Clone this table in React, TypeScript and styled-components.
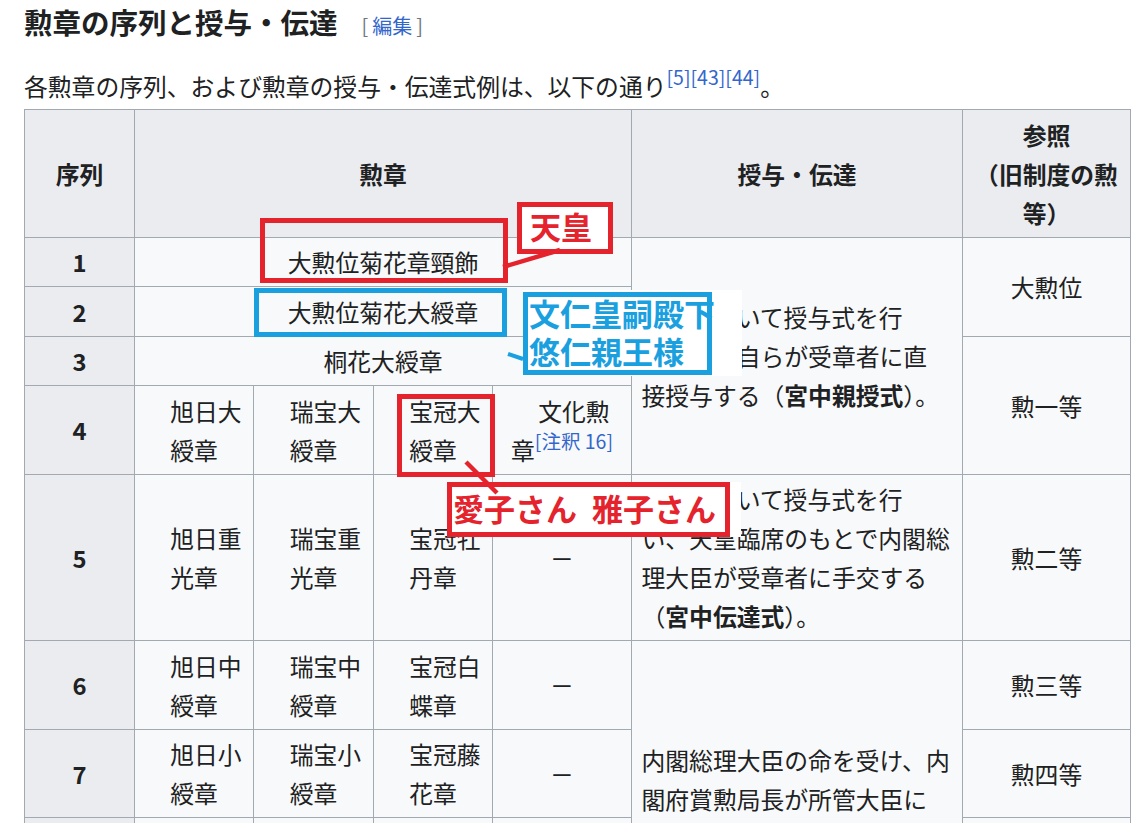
import styled, { createGlobalStyle } from "styled-components";

const RED = "#e4232d";
const BLUE = "#1ba0df";
const LINK = "#3366cc";
const RULE = "#a2a9b1";

const GlobalStyle = createGlobalStyle`
  html, body {
    margin: 0;
    padding: 0;
    background: #ffffff;
  }
  body {
    color: #202122;
    font-family: "Noto Sans CJK JP", "Noto Sans", sans-serif;
  }
`;

const Page = styled.main`
  position: relative;
  width: 1137px;
  height: 823px;
  overflow: hidden;
  padding-left: 24px;
  box-sizing: border-box;
`;

const Heading = styled.h3`
  margin: 0;
  font-size: 28.5px;
  line-height: 44px;
  font-weight: 700;
`;

const EditSection = styled.span`
  margin-left: 20px;
  font-size: 20px;
  font-weight: 400;
`;

const Bracket = styled.span`
  margin: 0 4px;
  color: #72777d;
`;

const EditLink = styled.a`
  color: ${LINK};
  text-decoration: none;
`;

const Lead = styled.p`
  margin: 18px 0 0;
  font-size: 23.8px;
  line-height: 39px;
`;

const Ref = styled.sup`
  font-size: 19.5px;
  line-height: 0;
  vertical-align: 0.55em;
  color: ${LINK};
  text-indent: 0;
`;

const NoBreak = styled.span`
  white-space: nowrap;
`;

const Table = styled.table`
  margin-top: 4px;
  width: 1106px;
  table-layout: fixed;
  border-collapse: collapse;
  background: #f8f9fa;
  font-size: 23.8px;
  line-height: 39px;
  border: 1px solid ${RULE};
`;

const Cell = styled.td<{ $indent?: boolean; $left?: boolean }>`
  border: 1px solid ${RULE};
  padding: 4.76px 9.52px;
  text-align: ${(p) => (p.$left ? "left" : "center")};
  text-indent: ${(p) => (p.$indent ? "1em" : "0")};
  vertical-align: middle;
`;

const HeadCell = styled.th`
  border: 1px solid ${RULE};
  padding: 4.76px 9.52px;
  background: #eaecf0;
  font-weight: 700;
  text-align: center;
  vertical-align: middle;
`;

/* annotation overlays drawn on top of the screenshot */
const Frame = styled.div<{ $x: number; $y: number; $w: number; $h: number; $color: string }>`
  position: absolute;
  left: ${(p) => p.$x}px;
  top: ${(p) => p.$y}px;
  width: ${(p) => p.$w}px;
  height: ${(p) => p.$h}px;
  box-sizing: border-box;
  border: 5px solid ${(p) => p.$color};
`;

const RedLabel = styled(Frame)<{ $spill?: number }>`
  background: #ffffff;
  box-shadow: ${(p) => (p.$spill ? `${p.$spill}px 0 0 0 #ffffff` : "none")};
  color: ${RED};
  font-size: 31px;
  font-weight: 700;
  line-height: 42px;
  white-space: nowrap;
`;

const EmperorText = styled.div`
  padding-left: 8px;
  margin-top: -2px;
`;

const PrincessText = styled.div`
  display: flex;
  gap: 15px;
  padding-left: 1px;
`;

const HeirPatch = styled.div`
  position: absolute;
  left: 523px;
  top: 290px;
  width: 219px;
  height: 86px;
  background: #ffffff;
`;

const HeirBox = styled.div`
  margin-top: 2px;
  width: 189px;
  height: 83px;
  box-sizing: border-box;
  border: 5px solid ${BLUE};
  color: ${BLUE};
  font-size: 31px;
  font-weight: 700;
  line-height: 38px;
  white-space: nowrap;
`;

const HeirLines = styled.div`
  margin-top: -3px;
  padding-left: 1px;
`;

const Connectors = styled.svg`
  position: absolute;
  left: 0;
  top: 0;
  pointer-events: none;
`;

const lowerRows = [
  { n: 5, a: "旭日重光章", b: "瑞宝重光章", c: "宝冠牡丹章", old: "勲二等" },
  { n: 6, a: "旭日中綬章", b: "瑞宝中綬章", c: "宝冠白蝶章", old: "勲三等" },
  { n: 7, a: "旭日小綬章", b: "瑞宝小綬章", c: "宝冠藤花章", old: "勲四等" },
  { n: 8, a: "旭日双光章", b: "瑞宝双光章", c: "宝冠杏葉章", old: "勲五等" },
  { n: 9, a: "旭日単光章", b: "瑞宝単光章", c: "宝冠波光章", old: "勲六等" },
];

export default function App() {
  return (
    <Page>
      <GlobalStyle />
      <Heading>
        勲章の序列と授与・伝達
        <EditSection>
          <Bracket>[</Bracket>
          <EditLink href="#">編集</EditLink>
          <Bracket>]</Bracket>
        </EditSection>
      </Heading>
      <Lead>
        各勲章の序列、および勲章の授与・伝達式例は、以下の通り<Ref>[5][43][44]</Ref>。
      </Lead>

      <Table>
        <colgroup>
          <col style={{ width: 110 }} />
          <col style={{ width: 119 }} />
          <col style={{ width: 120 }} />
          <col style={{ width: 119 }} />
          <col style={{ width: 139 }} />
          <col style={{ width: 331 }} />
          <col style={{ width: 168 }} />
        </colgroup>
        <thead>
          <tr>
            <HeadCell>序列</HeadCell>
            <HeadCell colSpan={4}>勲章</HeadCell>
            <HeadCell>授与・伝達</HeadCell>
            <HeadCell>
              参照
              <br />
              （旧制度の勲等）
            </HeadCell>
          </tr>
        </thead>
        <tbody>
          <tr>
            <HeadCell>1</HeadCell>
            <Cell colSpan={4}>大勲位菊花章頸飾</Cell>
            <Cell rowSpan={4} $left>
              宮殿において授与式を行
              <br />
              い、天皇自らが受章者に直
              <br />
              接授与する（<b>宮中親授式</b>）。
            </Cell>
            <Cell rowSpan={2}>大勲位</Cell>
          </tr>
          <tr>
            <HeadCell>2</HeadCell>
            <Cell colSpan={4}>大勲位菊花大綬章</Cell>
          </tr>
          <tr>
            <HeadCell>3</HeadCell>
            <Cell colSpan={4}>桐花大綬章</Cell>
            <Cell rowSpan={2}>勲一等</Cell>
          </tr>
          <tr>
            <HeadCell>4</HeadCell>
            <Cell $indent>旭日大綬章</Cell>
            <Cell $indent>瑞宝大綬章</Cell>
            <Cell $indent>宝冠大綬章</Cell>
            <Cell $indent>
              文化勲
              <NoBreak>
                章<Ref>[注釈 16]</Ref>
              </NoBreak>
            </Cell>
          </tr>
          {lowerRows.map((row) => (
            <tr key={row.n}>
              <HeadCell>{row.n}</HeadCell>
              <Cell $indent>{row.a}</Cell>
              <Cell $indent>{row.b}</Cell>
              <Cell $indent>{row.c}</Cell>
              <Cell>－</Cell>
              {row.n === 5 && (
                <Cell $left>
                  宮殿において授与式を行
                  <br />
                  い、天皇臨席のもとで内閣総
                  <br />
                  理大臣が受章者に手交する
                  <br />
                  （<b>宮中伝達式</b>）。
                </Cell>
              )}
              {row.n === 6 && (
                <Cell rowSpan={4} $left>
                  内閣総理大臣の命を受け、内
                  <br />
                  閣府賞勲局長が所管大臣に
                  <br />
                  伝達し、所管大臣が受章者
                  <br />
                  に伝達する（大臣伝達）。
                </Cell>
              )}
              <Cell>{row.old}</Cell>
            </tr>
          ))}
        </tbody>
      </Table>

      <Frame $x={260} $y={218} $w={248} $h={65} $color={RED} />
      <RedLabel $x={517} $y={202} $w={96} $h={52} $color={RED}>
        <EmperorText>天皇</EmperorText>
      </RedLabel>

      <Frame $x={254} $y={288} $w={253} $h={49} $color={BLUE} />
      <HeirPatch>
        <HeirBox>
          <HeirLines>
            文仁皇嗣殿下
            <br />
            悠仁親王様
          </HeirLines>
        </HeirBox>
      </HeirPatch>

      <Frame $x={397} $y={394} $w={98} $h={83} $color={RED} />
      <RedLabel $x={447} $y={482} $w={283} $h={55} $color={RED} $spill={11}>
        <PrincessText>
          <span>愛子さん</span>
          <span>雅子さん</span>
        </PrincessText>
      </RedLabel>

      <Connectors width={1137} height={823} viewBox="0 0 1137 823">
        <line x1={560} y1={250} x2={503} y2={267} stroke={RED} strokeWidth={4.5} />
        <line x1={508} y1={354} x2={523} y2={359} stroke={BLUE} strokeWidth={4} />
        <line x1={466} y1={462} x2={497} y2={493} stroke={RED} strokeWidth={4.5} />
      </Connectors>
    </Page>
  );
}
